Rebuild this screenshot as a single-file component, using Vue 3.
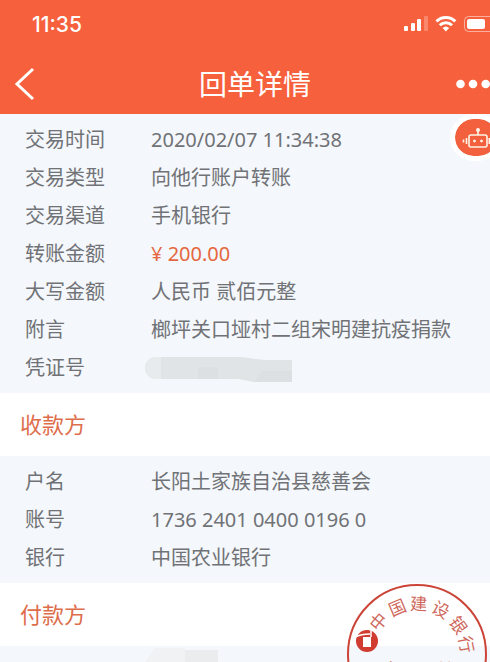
<template>
  <div class="page">
    <header class="top">
      <div class="status">
        <span class="clock">11:35</span>
        <svg class="status-icons" width="86" height="20" viewBox="0 0 86 20" aria-hidden="true">
          <rect x="0" y="12" width="4" height="5" rx="1" fill="#fff" />
          <rect x="7" y="9" width="4" height="8" rx="1" fill="#fff" />
          <rect x="13" y="5" width="4" height="12" rx="1" fill="#fff" />
          <rect x="20" y="2" width="4" height="15" rx="1" fill="#fff" opacity="0.25" />
          <path d="M32.500 7.400a13.400 13.400 0 0 1 18.800 0M35.800 11.200a8.600 8.600 0 0 1 12.200 0" fill="none" stroke="#fff" stroke-width="3" />
          <path d="M41.900 17.500l-3.300-3.400a4.900 4.900 0 0 1 6.600 0z" fill="#fff" />
          <rect x="60.500" y="2.500" width="32" height="15" rx="4" fill="none" stroke="#fff" opacity="0.5" />
          <rect x="63" y="5" width="18" height="10" rx="2" fill="#fff" />
        </svg>
      </div>
      <nav class="nav">
        <button class="icon-btn" aria-label="返回">
          <svg width="22" height="36" viewBox="0 0 22 36">
            <path d="M19 3L3 18l16 15" fill="none" stroke="#fff" stroke-width="3" />
          </svg>
        </button>
        <h1>回单详情</h1>
        <button class="icon-btn more" aria-label="更多">
          <svg width="34" height="10" viewBox="0 0 34 10">
            <circle cx="4.500" cy="5" r="4.300" fill="#fff" />
            <circle cx="17" cy="5" r="4.300" fill="#fff" />
            <circle cx="29.700" cy="5" r="4.300" fill="#fff" />
          </svg>
        </button>
      </nav>
    </header>

    <main>
      <dl class="list">
        <div v-for="row in details" :key="row.label" class="row">
          <dt>{{ row.label }}</dt>
          <dd :class="{ amount: row.amount }">
            <svg v-if="row.hidden" class="smudge" width="150" height="28" viewBox="0 0 150 28" aria-hidden="true">
              <path d="M12 2h85l23 3h28v22h-38l-16-3H12a11 11 0 0 1 0-22z" fill="#e0e4e6" />
              <path d="M17 2v22h-5a11 11 0 0 1 0-22z" fill="#e7ebed" />
              <path d="M54 12h20v12H54zM118 16h30v11h-38z" fill="#dce0e2" />
            </svg>
            <template v-else>{{ row.value }}</template>
          </dd>
        </div>
      </dl>

      <h2>收款方</h2>
      <dl class="list">
        <div v-for="row in payee" :key="row.label" class="row">
          <dt>{{ row.label }}</dt>
          <dd>{{ row.value }}</dd>
        </div>
      </dl>

      <div class="payer">
        <h2>付款方</h2>
        <div class="payer-body">
          <svg width="80" height="16" viewBox="0 0 80 16" aria-hidden="true">
            <path d="M0 16l10-14h30v14z" fill="#f0f2f4" />
            <path d="M40 4h33v12H40z" fill="#eaecee" />
          </svg>
        </div>
        <svg class="seal" width="142" height="142" viewBox="0 0 142 142" role="img" aria-label="中国建设银行">
          <circle cx="71" cy="71" r="69" fill="none" stroke="#cb4437" stroke-width="2" />
          <text
            v-for="c in sealChars"
            :key="c.text"
            x="71"
            y="27"
            :transform="`rotate(${c.angle} 71 71)`"
            class="seal-char"
          >{{ c.text }}</text>
          <circle cx="21" cy="58" r="11" fill="#d13c30" />
          <path d="M9 54q6-3 15-3M25 46v8" fill="none" stroke="#fff" stroke-width="1.500" />
          <path d="M17 54h8v10h-8z" fill="#fff" />
          <text x="72" y="94" class="seal-char seal-name">电子回单</text>
        </svg>
      </div>
    </main>

    <button class="robot" aria-label="智能客服">
      <svg width="28" height="22" viewBox="0 0 28 22" fill="none" stroke="#fff4e8" stroke-width="1.600">
        <rect x="7" y="8" width="18" height="12" rx="2" />
        <path d="M16 8V3M4.500 11v6M1.500 12.500v3M27.300 11v6" />
        <circle cx="16" cy="3" r="1.200" fill="#fff4e8" />
        <circle cx="12.500" cy="14" r="1" fill="#fff4e8" stroke-width="1" />
        <circle cx="19.500" cy="14" r="1" fill="#fff4e8" stroke-width="1" />
      </svg>
    </button>
  </div>
</template>

<script setup>
const details = [
  { label: '交易时间', value: '2020/02/07 11:34:38' },
  { label: '交易类型', value: '向他行账户转账' },
  { label: '交易渠道', value: '手机银行' },
  { label: '转账金额', value: '¥ 200.00', amount: true },
  { label: '大写金额', value: '人民币 贰佰元整' },
  { label: '附言', value: '榔坪关口垭村二组宋明建抗疫捐款' },
  { label: '凭证号', hidden: true }
]

const payee = [
  { label: '户名', value: '长阳土家族自治县慈善会' },
  { label: '账号', value: '1736 2401 0400 0196 0' },
  { label: '银行', value: '中国农业银行' }
]

// characters run clockwise along the upper arc of the seal
const sealChars = [
  { text: '中', angle: -50 },
  { text: '国', angle: -23 },
  { text: '建', angle: 2 },
  { text: '设', angle: 28 },
  { text: '银', angle: 55 },
  { text: '行', angle: 79 }
]
</script>

<style>
body {
  background-color: #f4f7fb;
}
</style>

<style scoped>
.page {
  position: relative;
  overflow: hidden;
  font-family: "Noto Sans", "Noto Sans CJK SC", sans-serif;
  font-size: 20px;
  color: #707276;
}
h1,
h2,
dl,
dd {
  margin: 0;
  font-weight: 400;
}
button {
  border: 0;
  padding: 0;
  background: none;
}
.top {
  background-color: #f7603c;
  color: #fff;
}
.status {
  display: flex;
  justify-content: space-between;
  align-items: center;
  height: 48px;
  padding: 0 0 6px 32px;
}
.clock {
  font-family: Inter, sans-serif;
  font-size: 21px;
  font-weight: 500;
}
.nav {
  display: flex;
  justify-content: space-between;
  align-items: center;
  height: 60px;
  padding-left: 14px;
}
.icon-btn {
  display: flex;
  width: 40px;
}
.more {
  width: 34px;
}
h1 {
  font-size: 28px;
  line-height: 40px;
}
.list {
  padding: 7px 0 6px 25px;
  background-color: #f4f7fb;
}
.row {
  display: flex;
  line-height: 38px;
}
dt {
  width: 126px;
  flex: none;
}
dd {
  white-space: nowrap;
}
.amount {
  color: #e5673f;
}
.smudge {
  display: block;
  margin: 6px 0 0 -7px;
}
h2 {
  padding-left: 20px;
  background-color: #fff;
  color: #de6d4b;
  font-size: 22px;
  line-height: 63px;
}
.payer {
  position: relative;
}
.payer-body {
  display: flex;
  padding-left: 145px;
  background-color: #f4f7fb;
}
.seal {
  position: absolute;
  top: 0;
  right: 2px;
}
.seal-char {
  font-family: "Noto Sans CJK SC", serif;
  font-size: 17px;
  fill: #cf675c;
  text-anchor: middle;
}
.seal-name {
  font-size: 18px;
}
.robot {
  position: absolute;
  top: 114px;
  right: -12px;
  display: flex;
  align-items: center;
  width: 52px;
  height: 47px;
  padding-left: 7px;
  box-sizing: border-box;
  border: 5px solid #fff;
  border-radius: 24px;
  background-color: #f2603d;
  background-clip: padding-box;
}
</style>
